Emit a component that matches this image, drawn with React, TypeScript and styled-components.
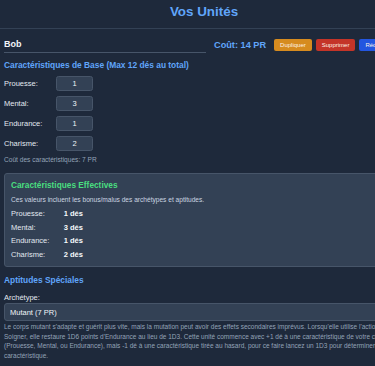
import { createGlobalStyle, styled } from "styled-components";

const GlobalStyle = createGlobalStyle`
  html, body {
    margin: 0;
    padding: 0;
    background: #1e293b;
    overflow: hidden;
  }
  body {
    font-family: "Liberation Sans", Arial, sans-serif;
    color: #e2e8f0;
  }
`;

const Page = styled.div`
  width: 408px;
  box-sizing: border-box;
  padding: 0 4px;
`;

const Header = styled.header`
  margin: 0 -4px;
  padding: 4px 0 8px;
  border-bottom: 1px solid #334155;
`;

const Title = styled.h1`
  margin: 0;
  text-align: center;
  font-size: 13.4px;
  line-height: 16px;
  font-weight: 700;
  color: #60a5fa;
`;

const UnitRow = styled.div`
  margin-top: 7px;
  height: 17px;
  display: flex;
  align-items: center;
  gap: 8px;
`;

const NameInput = styled.input`
  flex: 0 0 202px;
  height: 17px;
  box-sizing: border-box;
  padding: 0;
  border: none;
  border-bottom: 1px solid #475569;
  background: transparent;
  color: #f1f5f9;
  font-family: inherit;
  font-size: 9px;
  font-weight: 700;
  outline: none;
`;

const Cost = styled.span`
  color: #60a5fa;
  font-size: 9.2px;
  font-weight: 700;
  white-space: nowrap;
`;

const Actions = styled.div`
  display: flex;
  gap: 4px;
  margin-top: 1px;
`;

const ActionButton = styled.button<{ $color: string }>`
  height: 12px;
  padding: 0 6px;
  border: none;
  border-radius: 2px;
  background: ${(p) => p.$color};
  color: #fdf2e9;
  font-family: inherit;
  font-size: 6px;
  line-height: 12px;
  white-space: nowrap;
`;

const SectionTitle = styled.h2<{ $top: number }>`
  margin: ${(p) => p.$top}px 0 0;
  font-size: 8.4px;
  line-height: 11px;
  font-weight: 700;
  color: #60a5fa;
`;

const StatList = styled.div`
  margin-top: 5px;
  display: flex;
  flex-direction: column;
  gap: 5px;
`;

const StatRow = styled.label`
  display: flex;
  align-items: center;
  height: 15px;
  font-size: 7.5px;
  color: #e2e8f0;
`;

const StatLabel = styled.span`
  width: 52px;
`;

const StatInput = styled.input`
  width: 37px;
  height: 15px;
  box-sizing: border-box;
  padding: 0;
  border: 1px solid #475569;
  border-radius: 2.5px;
  background: #334155;
  color: #f1f5f9;
  text-align: center;
  font-family: inherit;
  font-size: 7.5px;
  outline: none;
`;

const Note = styled.p`
  margin: 5px 0 0;
  font-size: 6.6px;
  line-height: 8px;
  color: #94a3b8;
`;

const EffectiveBox = styled.section`
  margin-top: 9px;
  padding: 6px 6px 5px;
  border: 1px solid #475569;
  border-radius: 3px;
  background: #334155;
`;

const EffectiveTitle = styled.h3`
  margin: 0;
  font-size: 8.3px;
  line-height: 11px;
  font-weight: 700;
  color: #4ade80;
`;

const BoxNote = styled.p`
  margin: 5px 0 3.3px;
  font-size: 6.6px;
  line-height: 8px;
  color: #cbd5e1;
`;

const EffRow = styled.div`
  display: flex;
  font-size: 7.5px;
  line-height: 13.4px;
  color: #e2e8f0;
`;

const EffLabel = styled.span`
  width: 52.7px;
`;

const EffValue = styled.strong`
  color: #f8fafc;
  font-weight: 700;
`;

const FieldLabel = styled.label`
  display: block;
  margin-top: 7px;
  font-size: 7.5px;
  line-height: 9px;
  color: #e2e8f0;
`;

const Select = styled.select`
  display: block;
  width: 100%;
  height: 18px;
  margin-top: 1.5px;
  box-sizing: border-box;
  padding: 0 5px;
  border: 1px solid #475569;
  border-radius: 3px;
  background: #334155;
  color: #f1f5f9;
  font-family: inherit;
  font-size: 7.5px;
  appearance: none;
  outline: none;
`;

const Description = styled.p`
  margin: 1px 0 0;
  font-size: 6.5px;
  line-height: 9.5px;
  color: #94a3b8;
`;

const stats = [
  { name: "Prouesse", base: 1, eff: 1 },
  { name: "Mental", base: 3, eff: 3 },
  { name: "Endurance", base: 1, eff: 1 },
  { name: "Charisme", base: 2, eff: 2 },
];

export default function App() {
  return (
    <Page>
      <GlobalStyle />
      <Header>
        <Title>Vos Unités</Title>
      </Header>

      <UnitRow>
        <NameInput defaultValue="Bob" />
        <Cost>Coût: 14 PR</Cost>
        <Actions>
          <ActionButton $color="#d68b1f">Dupliquer</ActionButton>
          <ActionButton $color="#c43428">Supprimer</ActionButton>
          <ActionButton $color="#2356e0">Réduire</ActionButton>
        </Actions>
      </UnitRow>

      <SectionTitle $top={7}>Caractéristiques de Base (Max 12 dés au total)</SectionTitle>
      <StatList>
        {stats.map((s) => (
          <StatRow key={s.name}>
            <StatLabel>{s.name}:</StatLabel>
            <StatInput type="text" defaultValue={s.base} />
          </StatRow>
        ))}
      </StatList>
      <Note>Coût des caractéristiques: 7 PR</Note>

      <EffectiveBox>
        <EffectiveTitle>Caractéristiques Effectives</EffectiveTitle>
        <BoxNote>Ces valeurs incluent les bonus/malus des archétypes et aptitudes.</BoxNote>
        {stats.map((s) => (
          <EffRow key={s.name}>
            <EffLabel>{s.name}:</EffLabel>
            <EffValue>{s.eff} dés</EffValue>
          </EffRow>
        ))}
      </EffectiveBox>

      <SectionTitle $top={8}>Aptitudes Spéciales</SectionTitle>
      <FieldLabel>Archétype:</FieldLabel>
      <Select defaultValue="mutant">
        <option value="mutant">Mutant (7 PR)</option>
      </Select>
      <Description>
        Le corps mutant s'adapte et guérit plus vite, mais la mutation peut avoir des effets
        secondaires imprévus. Lorsqu'elle utilise l'action Soigner, elle restaure 1D6 points
        d'Endurance au lieu de 1D3. Cette unité commence avec +1 dé à une caractéristique de
        votre choix (Prouesse, Mental, ou Endurance), mais -1 dé à une caractéristique tirée au
        hasard, pour ce faire lancez un 1D3 pour déterminer la caractéristique.
      </Description>
    </Page>
  );
}
